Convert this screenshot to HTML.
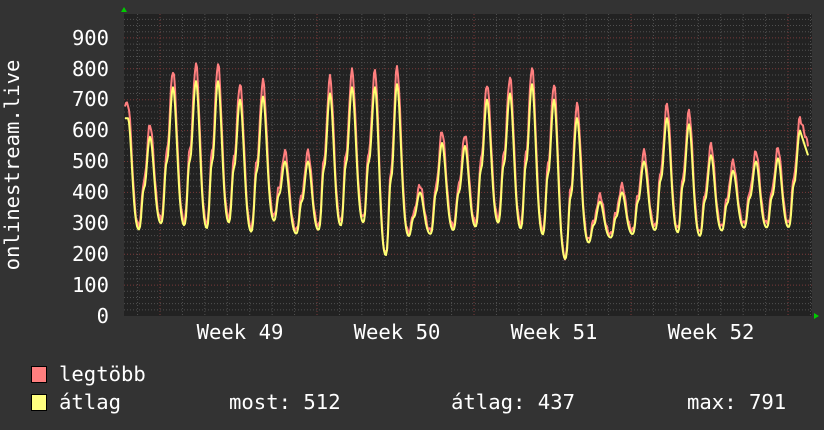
<!DOCTYPE html>
<html><head><meta charset="utf-8"><style>
html,body{margin:0;padding:0;background:#333;width:824px;height:430px;overflow:hidden}
svg{display:block}
text{font-family:"DejaVu Sans Mono","Liberation Mono",monospace;fill:#fff}
</style></head><body>
<svg id="g" width="824" height="430" xmlns="http://www.w3.org/2000/svg">
<rect width="824" height="430" fill="#333"/>
<rect x="124" y="14" width="688" height="302" fill="#222"/>
<g id="grid"></g>
<path id="mx" fill="none" stroke="#ff7f7f" stroke-width="2" stroke-linejoin="round"/>
<path id="av" fill="none" stroke="#ffff73" stroke-width="2" stroke-linejoin="round"/>
<polygon points="121,12 127,12 124,7" fill="#0c0"/>
<polygon points="814,313 814,319 819,316" fill="#0c0"/>
<g font-size="20.5" text-anchor="end">
<text x="109" y="323">0</text><text x="109" y="292">100</text><text x="109" y="261">200</text>
<text x="109" y="230">300</text><text x="109" y="199">400</text><text x="109" y="168">500</text>
<text x="109" y="137">600</text><text x="109" y="106">700</text><text x="109" y="76">800</text>
<text x="109" y="45">900</text>
</g>
<g font-size="20.6" text-anchor="middle">
<text x="240" y="339">Week 49</text><text x="397" y="339">Week 50</text>
<text x="554" y="339">Week 51</text><text x="711" y="339">Week 52</text>
</g>
<text font-size="20.6" transform="translate(19,165) rotate(-90)" text-anchor="middle">onlinestream.live</text>
<rect x="31.5" y="366.5" width="15" height="16" fill="#ff7f7f" stroke="#000"/>
<rect x="31.5" y="394.5" width="15" height="16" fill="#ffff7f" stroke="#000"/>
<g font-size="20.6">
<text x="59" y="381">legtöbb</text>
<text x="59" y="409">átlag</text>
<text x="229" y="409">most: 512</text>
<text x="451" y="409">átlag: 437</text>
<text x="687" y="409">max: 791</text>
</g>
</svg>
<script>
var g=document.getElementById('grid'),s='';
function X(v){return 316-v*0.309;}
for(var v=20;v<=960;v+=20){var y=X(v);if(y<14)break;var maj=v%100==0;
s+='<line x1="124" x2="812" y1="'+y+'" y2="'+y+'" stroke="'+(maj?'#7a3a3a':'#505050')+'" stroke-dasharray="1,2"/>';}
for(var x=160-22.43;x<812;x+=22.43){var k=Math.round((x-160)/22.43);var maj=((k%7)+7)%7==0;
s+='<line y1="14" y2="316" x1="'+x+'" x2="'+x+'" stroke="'+(maj?'#7a3a3a':'#505050')+'" stroke-dasharray="1,2"/>';}
g.innerHTML=s;
var P=[[128,640],[150,580],[173,740],[196,760],[218,760],[240,700],[263,710],[285,500],[308,500],[330,720],[352,740],[375,740],[397,750],[420,400],[442,560],[465,550],[487,700],[510,720],[532,750],[554,700],[577,640],[600,370],[622,400],[644,500],[667,640],[689,620],[711,520],[733,470],[756,500],[778,510],[800,600]];
var T=[280,270,290,280,270,290,260,300,260,270,280,290,180,250,260,270,280,290,270,250,170,230,250,260,270,260,250,270,280,280,280];
function val(x){for(var i=0;i<P.length-1;i++){if(x<=P[i+1][0])break;}
var a=P[i],b=P[Math.min(i+1,P.length-1)],t=(x-a[0])/(b[0]-a[0]);if(x>P[P.length-1][0]){return P[P.length-1][1]-(x-800)*10;}
if(x<a[0])return a[1];
var tr=T[i+1]||280;
var w1=Math.exp(-Math.pow(t/0.24,2)),w2=Math.exp(-Math.pow((1-t)/0.24,2)),bump=0.25*Math.exp(-Math.pow((t-0.68)/0.09,2));
return tr+(a[1]-tr)*w1+(b[1]-tr)*w2+(b[1]-tr)*bump;}
var da='',dm='';
for(var x=125;x<=808;x++){var v=val(x);var m=v+(v-250)*0.09+10+8*Math.sin(x*1.7);
da+=(x==125?'M':'L')+x+','+X(v).toFixed(1);dm+=(x==125?'M':'L')+x+','+X(m).toFixed(1);}
document.getElementById('av').setAttribute('d',da);document.getElementById('mx').setAttribute('d',dm);
</script>
</body></html>
